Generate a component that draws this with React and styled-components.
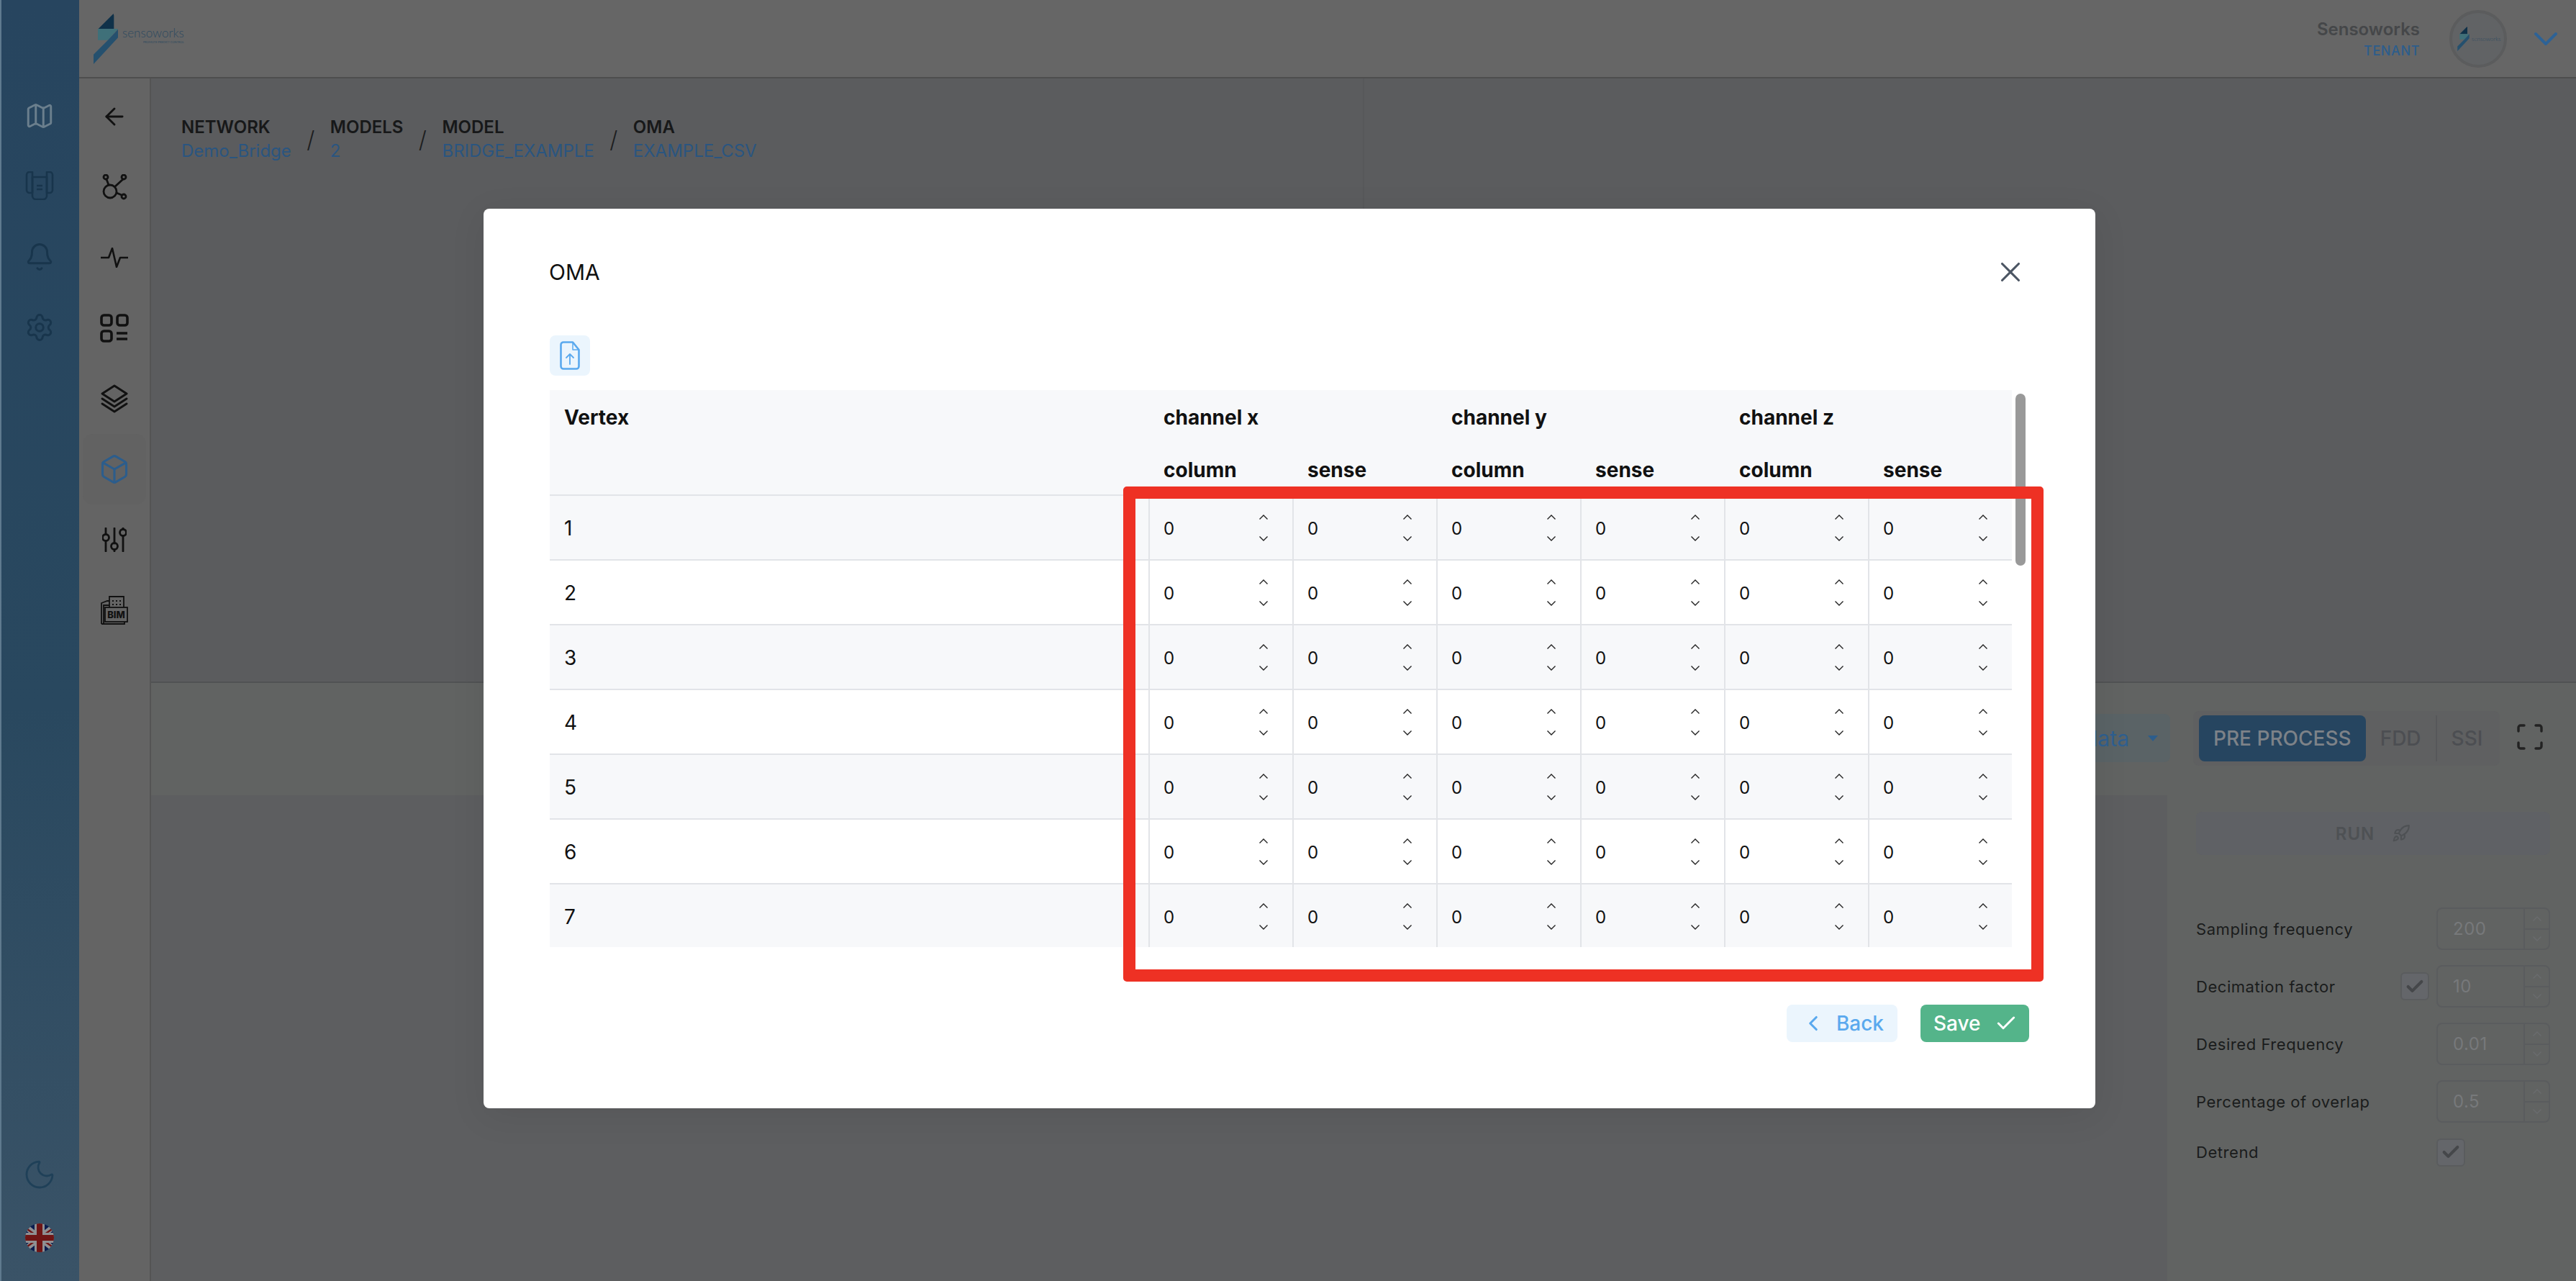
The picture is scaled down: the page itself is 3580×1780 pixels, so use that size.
import React from 'react'
import styled, { createGlobalStyle } from 'styled-components'
import { ArrowLeft, Bell, Box, Check, ChevronDown, ChevronLeft, Map, Moon, Rocket, Settings, X } from 'lucide-react'

const GlobalStyle = createGlobalStyle`
  html, body {
    margin: 0;
    padding: 0;
    background: #5b5c5e;
  }
  body {
    font-family: Inter, "Liberation Sans", sans-serif;
    overflow: hidden;
  }
  * {
    box-sizing: border-box;
  }
`

const Page = styled.div`
  position: relative;
  display: flex;
  width: 3580px;
  height: 1780px;
  overflow: hidden;
`

const Rail = styled.nav`
  width: 110px;
  flex: none;
  display: flex;
  flex-direction: column;
  align-items: center;
  padding-top: 138px;
  border-left: 2px solid #5f7a8e;
  background: linear-gradient(180deg, #27455f 0%, #29485f 55%, #3a5367 100%);
`

const RailItem = styled.div`
  height: 98px;
  flex: none;
  display: flex;
  align-items: flex-start;
  justify-content: center;
  padding-top: 2px;
  margin-left: -2px;
  color: ${p => p.$color || '#18354c'};
`

const RailBottom = styled.div`
  margin-top: auto;
  margin-left: -2px;
  padding-bottom: 40px;
  display: flex;
  flex-direction: column;
  align-items: center;
  gap: 44px;
  color: #1f4058;
`

const Shell = styled.div`
  flex: 1;
  min-width: 0;
  display: flex;
  flex-direction: column;
`

const Header = styled.header`
  height: 109px;
  flex: none;
  display: flex;
  align-items: center;
  padding: 0 14px 0 20px;
  background: #666;
  border-bottom: 2px solid #4e4e4e;
`

const LogoBlock = styled.div`
  display: flex;
  align-items: center;
`

const LogoWords = styled.div`
  display: flex;
  flex-direction: column;
  align-items: flex-end;
  margin-left: 6px;
  margin-bottom: 10px;
`

const LogoName = styled.span`
  font-family: Lato, sans-serif;
  font-weight: 300;
  font-size: 17px;
  line-height: 20px;
  color: #2e4a60;
`

const LogoTag = styled.span`
  font-family: Lato, sans-serif;
  font-size: 4px;
  line-height: 6px;
  color: #2e4a60;
`

const Account = styled.div`
  margin-left: auto;
  display: flex;
  align-items: center;
`

const AccountText = styled.div`
  display: flex;
  flex-direction: column;
  align-items: flex-end;
  gap: 4px;
`

const AccountName = styled.span`
  font-size: 24px;
  line-height: 30px;
  font-weight: 600;
  color: #454749;
`

const AccountRole = styled.span`
  font-size: 18px;
  line-height: 22px;
  font-weight: 500;
  letter-spacing: 0.6px;
  color: #2c5d8c;
`

const Avatar = styled.div`
  width: 80px;
  height: 80px;
  margin: 0 26px 0 41px;
  flex: none;
  border-radius: 50%;
  border: 4px solid #5b5c5d;
  background: #616365;
  display: flex;
  align-items: center;
  gap: 3px;
  padding-left: 7px;
  overflow: hidden;
`

const AvatarName = styled.span`
  font-family: Lato, sans-serif;
  font-weight: 300;
  font-size: 8px;
  color: #2e4a60;
`

const Body = styled.div`
  flex: 1;
  min-height: 0;
  display: flex;
`

const SideNav = styled.nav`
  width: 100px;
  flex: none;
  display: flex;
  flex-direction: column;
  align-items: center;
  padding-top: 4px;
  background: #646464;
  border-right: 2px solid #545454;
`

const SideItem = styled.div`
  width: 88px;
  height: 98px;
  flex: none;
  display: flex;
  align-items: center;
  justify-content: center;
  border-radius: 14px;
  color: ${p => (p.$active ? '#2c5d8c' : '#111')};
  background: ${p => (p.$active ? '#626262' : 'transparent')};
`

const Main = styled.main`
  flex: 1;
  min-width: 0;
  display: flex;
  flex-direction: column;
`

const TopPane = styled.section`
  height: 838px;
  flex: none;
  display: flex;
  background: #5b5c5e;
`

const TopLeft = styled.div`
  width: 1686px;
  flex: none;
  padding: 54px 0 0 42px;
  border-right: 2px solid #57585a;
`

const Crumbs = styled.div`
  display: flex;
  align-items: center;
`

const Crumb = styled.div`
  flex: none;
  display: flex;
  flex-direction: column;
  gap: 5px;
`

const CrumbTitle = styled.span`
  font-size: 24px;
  line-height: 28px;
  font-weight: 600;
  color: #171819;
`

const CrumbValue = styled.span`
  font-size: 24px;
  line-height: 28px;
  color: #2a5580;
`

const CrumbSlash = styled.span`
  width: 54px;
  flex: none;
  text-align: center;
  font-size: 32px;
  font-weight: 300;
  color: #1d1e1f;
`

const ToolBar = styled.section`
  height: 158px;
  flex: none;
  display: flex;
  align-items: flex-start;
  justify-content: flex-end;
  padding: 39px 46px 0 0;
  background: #616362;
  border-top: 2px solid #515254;
`

const DataSelect = styled.div`
  height: 67px;
  margin-top: 4px;
  padding: 0 17px 0 30px;
  display: flex;
  align-items: center;
  gap: 26px;
  border-radius: 8px;
  background: #5a6366;
  font-size: 30px;
  color: #2f5f8f;
`

const Caret = styled.span`
  width: 0;
  height: 0;
  border-left: 7px solid transparent;
  border-right: 7px solid transparent;
  border-top: 8px solid #2c5d8c;
`

const Tabs = styled.div`
  width: 426px;
  height: 76px;
  margin: 0 24px 0 32px;
  padding: 6px 8px;
  display: flex;
  align-items: stretch;
  border-radius: 8px;
  background: #5f6061;
`

const Tab = styled.div`
  flex: none;
  display: flex;
  align-items: center;
  justify-content: center;
  padding: 0 20px;
  white-space: nowrap;
  font-size: 28px;
  font-weight: 500;
  color: ${p => (p.$active ? '#7d8288' : '#4c4e52')};
  background: ${p => (p.$active ? '#264560' : 'transparent')};
  border-left: ${p => (p.$divided ? '2px solid #57585a' : 'none')};
  border-radius: ${p => (p.$divided ? '0' : '8px')};
`

const ExpandIcon = styled.svg`
  width: 36px;
  height: 36px;
  margin-top: 18px;
  flex: none;
`

const LowerPane = styled.section`
  flex: 1;
  min-height: 0;
  display: flex;
`

const PlotArea = styled.div`
  flex: 1;
  background: #5d5e60;
`

const ControlPanel = styled.aside`
  width: 568px;
  flex: none;
  padding: 23px 36px 0 40px;
  background: #616362;
`

const RunButton = styled.div`
  height: 60px;
  margin-bottom: 73px;
  display: flex;
  align-items: center;
  justify-content: center;
  gap: 24px;
  border-radius: 8px;
  background: #5f6165;
  font-size: 24px;
  font-weight: 600;
  letter-spacing: 1px;
  color: #4e5154;
`

const FormRow = styled.div`
  height: ${p => (p.$short ? 40 : 59)}px;
  margin-bottom: 21px;
  display: flex;
  align-items: center;
`

const FormLabel = styled.span`
  flex: 1;
  font-size: 22px;
  letter-spacing: 0.55px;
  color: #1a1c1c;
`

const FormCheck = styled.div`
  width: 40px;
  height: 39px;
  flex: none;
  display: flex;
  align-items: center;
  justify-content: center;
  margin-right: ${p => (p.$tail ? 118 : 10)}px;
  border-radius: 6px;
  border: 2px solid #5a5c5e;
  background: #64666a;
  color: #45474a;
`

const FormInput = styled.div`
  width: 158px;
  height: 59px;
  flex: none;
  display: flex;
  border-radius: 8px;
  border: 2px solid #5a5c5e;
`

const FormValue = styled.span`
  flex: 1;
  padding-left: 21px;
  align-self: center;
  font-size: 24px;
  letter-spacing: 0.5px;
  color: #77797b;
`

const FormSpin = styled.div`
  width: 35px;
  flex: none;
  display: flex;
  flex-direction: column;
  border-left: 2px solid #5a5c5e;
`

const FormSpinCell = styled.div`
  flex: 1;
  display: flex;
  align-items: center;
  justify-content: center;
  border-top: ${p => (p.$lower ? '2px solid #5a5c5e' : 'none')};
`

/* modal */

const Modal = styled.div`
  position: absolute;
  left: 672px;
  top: 290px;
  width: 2240px;
  height: 1250px;
  padding: 68px 92px 0;
  border-radius: 8px;
  background: #fff;
  box-shadow: 0 10px 50px rgba(0, 0, 0, 0.08);
`

const ModalHeader = styled.div`
  height: 40px;
  display: flex;
  align-items: center;
  justify-content: space-between;
  padding-right: 3px;
`

const ModalTitle = styled.h2`
  margin: 0 0 0 -1px;
  font-size: 30px;
  font-weight: 400;
  color: #111;
`

const CloseButton = styled.div`
  width: 46px;
  height: 40px;
  display: flex;
  align-items: center;
  justify-content: center;
  color: #4b5563;
  svg {
    flex: none;
  }
`

const UploadButton = styled.div`
  width: 56px;
  height: 56px;
  margin: 68px 0 20px;
  display: flex;
  align-items: center;
  justify-content: center;
  border-radius: 8px;
  background: #ebf5fd;
`

const TableArea = styled.div`
  position: relative;
  width: 2052px;
  height: 774px;
  overflow: hidden;
`

const ScrollThumb = styled.div`
  position: absolute;
  right: 1px;
  top: 5px;
  width: 14px;
  height: 239px;
  border-radius: 7px;
  background: #999;
`

const Table = styled.table`
  width: 2032px;
  table-layout: fixed;
  border-collapse: separate;
  border-spacing: 0;
  color: #111;
`

const HeadCell = styled.th`
  height: ${p => p.$height}px;
  padding: 0 0 0 ${p => p.$pad || 21}px;
  text-align: left;
  vertical-align: ${p => (p.$top ? 'top' : 'middle')};
  font-size: 28px;
  font-weight: 700;
  line-height: 34px;
  background: #f7f8fa;
  border-bottom: ${p => (p.$last ? '2px solid #e2e4e8' : 'none')};
`

const VertexHead = styled(HeadCell)`
  padding-top: 21px;
`

const VertexCell = styled.td`
  height: 90px;
  padding: 2px 0 0 20px;
  font-size: 28px;
  background: ${p => (p.$odd ? '#f7f8fa' : '#fff')};
  border-bottom: 2px solid #e2e4e8;
`

const ValueCell = styled.td`
  height: 90px;
  padding: 0;
  background: ${p => (p.$odd ? '#f7f8fa' : '#fff')};
  border-bottom: 2px solid #e2e4e8;
  border-left: 2px solid #e2e4e8;
`

const NumberField = styled.div`
  display: flex;
  align-items: center;
  justify-content: space-between;
  padding: 0 34px 0 19px;
  font-size: 24px;
  color: #111;
`

const FieldValue = styled.span`
  padding-top: 2px;
`

const Spinner = styled.div`
  display: flex;
  flex-direction: column;
  gap: 23px;
`

const Chevron = styled.svg`
  display: block;
  width: 12px;
  height: 7px;
`

const ModalFooter = styled.div`
  margin-top: 80px;
  display: flex;
  justify-content: flex-end;
  gap: 32px;
`

const FooterButton = styled.div`
  width: ${p => p.$width}px;
  height: 52px;
  padding: ${p => p.$padding};
  display: flex;
  align-items: center;
  justify-content: space-between;
  border-radius: 8px;
  font-size: 28px;
  font-weight: 500;
  color: ${p => (p.$primary ? '#fff' : '#5aa9ee')};
  background: ${p => (p.$primary ? '#54b48a' : '#ebf5fd')};
`

const Highlight = styled.div`
  position: absolute;
  left: 889px;
  top: 386px;
  width: 1279px;
  height: 688px;
  border: 17px solid #ee3124;
  border-radius: 5px;
  pointer-events: none;
`

const LogoMark = ({ width, height }) => (
  <svg width={width} height={height} viewBox="0 0 102 210" style={{ flex: 'none' }}>
    <polygon points="83,0 85,8 85,63 20,63" fill="#0f3149" />
    <polygon points="18,63 102,63 60,110 18,110" fill="#3f7079" />
    <polygon points="102,65 102,100 0,210 0,170 60,110" fill="#25506e" />
  </svg>
)

const DeviceIcon = () => (
  <svg width="40" height="40" viewBox="0 0 40 40" fill="none" stroke="currentColor" strokeWidth="2.6" strokeLinejoin="round">
    <path d="M10 30H6a4 4 0 0 1-4-4V5a4 4 0 0 1 4-4h4v29zM30 30h4a4 4 0 0 0 4-4V5a4 4 0 0 0-4-4h-4v29z" />
    <path d="M10 8h20v26a5 5 0 0 1-5 5h-10a5 5 0 0 1-5-5z" />
    <path d="M16 20h8M16 25h8" />
  </svg>
)

const UkFlag = () => (
  <svg width="40" height="40" viewBox="0 0 40 40">
    <defs>
      <clipPath id="flag-circle">
        <circle cx="20" cy="20" r="20" />
      </clipPath>
    </defs>
    <g clipPath="url(#flag-circle)">
      <rect width="40" height="40" fill="#0b1d50" />
      <path d="M0 4L40 36M40 4L0 36" stroke="#8f8f92" strokeWidth="8" />
      <path d="M0 6L40 34M40 6L0 34" stroke="#6f1515" strokeWidth="2.5" />
      <path d="M20 0V40M0 20H40" stroke="#8f8f92" strokeWidth="14" />
      <path d="M20 0V40M0 20H40" stroke="#6f1515" strokeWidth="8" />
    </g>
  </svg>
)

const NetworkIcon = () => (
  <svg width="36" height="36" viewBox="0 0 36 36" fill="none" stroke="currentColor" strokeWidth="2.8">
    <circle cx="12" cy="24" r="9" />
    <circle cx="6" cy="4" r="3" />
    <circle cx="31" cy="4" r="3" />
    <circle cx="31" cy="31" r="3" />
    <path d="M7 7l3 8M30 7L18 18M21 26l7 3" />
  </svg>
)

const PulseIcon = () => (
  <svg width="38" height="28" viewBox="0 0 38 28" fill="none" stroke="currentColor" strokeWidth="2.6" strokeLinejoin="round">
    <path d="M0 14h11l5-13 6 26 5-13h11" />
  </svg>
)

const WidgetsIcon = () => (
  <svg width="40" height="40" viewBox="0 0 40 40" fill="none" stroke="currentColor" strokeWidth="3.6">
    <rect x="2" y="2" width="14" height="14" rx="3.5" />
    <rect x="24" y="2" width="14" height="14" rx="3.5" />
    <rect x="2" y="24" width="14" height="14" rx="3.5" />
    <path d="M23 27h15M23 35h15" />
  </svg>
)

const LayersIcon = () => (
  <svg width="38" height="40" viewBox="0 0 38 40" fill="none" stroke="currentColor" strokeWidth="3" strokeLinejoin="round" strokeLinecap="round">
    <path d="M19 2l17 11-17 11L2 13z" />
    <path d="M2 20l17 11 17-11M2 27l17 11 17-11" />
  </svg>
)

const SlidersIcon = () => (
  <svg width="34" height="34" viewBox="0 0 34 34" fill="none" stroke="currentColor" strokeWidth="2.8" strokeLinecap="round">
    <path d="M5 1v8M5 19v14M17 1v21M17 31v2M29 1v1M29 12v21" />
    <circle cx="5" cy="14" r="4.5" />
    <circle cx="17" cy="26" r="4.5" />
    <circle cx="29" cy="7" r="4.5" />
  </svg>
)

const BimIcon = () => (
  <svg width="38" height="40" viewBox="0 0 38 40" fill="none" stroke="currentColor" strokeWidth="1.8">
    <path d="M12 16V1h20v15M1 39V10l8-3h3M1 39h32v-3" />
    <path d="M4 39V13h8" />
    <rect x="6" y="16" width="31" height="20" />
    <path d="M16 7h2M21 7h2M26 7h2M16 12h2M21 12h2M26 12h2" strokeWidth="2" />
    <text x="21.5" y="31" textAnchor="middle" fontSize="13" fontWeight="800" fontFamily="Inter, sans-serif" fill="currentColor" stroke="none">BIM</text>
  </svg>
)

const UploadFileIcon = () => (
  <svg width="28" height="40" viewBox="0 0 28 40" fill="none" stroke="#5aa9ee" strokeLinejoin="round">
    <path d="M18 1.5H5a3.5 3.5 0 0 0-3.5 3.5v30A3.5 3.5 0 0 0 5 38.500h18a3.500 3.500 0 0 0 3.500-3.500V12z" strokeWidth="2.600" />
    <path d="M18 1.500V12h8.500" strokeWidth="1.500" />
    <path d="M14 32V18M9 23l5-5 5 5" strokeWidth="1.800" strokeLinecap="round" />
  </svg>
)

const ChevronUpMark = ({ color = '#222' }) => (
  <Chevron viewBox="0 0 12 7" fill="none" stroke={color} strokeWidth="1.4">
    <path d="M0.5 6.500L6 1l5.500 5.500" />
  </Chevron>
)

const ChevronDownMark = ({ color = '#222' }) => (
  <Chevron viewBox="0 0 12 7" fill="none" stroke={color} strokeWidth="1.4">
    <path d="M0.5 0.500L6 6l5.500-5.500" />
  </Chevron>
)

const crumbs = [
  { title: 'NETWORK', value: 'Demo_Bridge' },
  { title: 'MODELS', value: '2' },
  { title: 'MODEL', value: 'BRIDGE_EXAMPLE' },
  { title: 'OMA', value: 'EXAMPLE_CSV' },
]

const formRows = [
  { label: 'Sampling frequency', value: '200' },
  { label: 'Decimation factor', value: '10', check: true },
  { label: 'Desired Frequency', value: '0.01' },
  { label: 'Percentage of overlap', value: '0.5' },
]

const channels = ['channel x', 'channel y', 'channel z']
const rows = [1, 2, 3, 4, 5, 6, 7]
const inputs = [0, 1, 2, 3, 4, 5]

const NumberCell = ({ odd }) => (
  <ValueCell $odd={odd}>
    <NumberField>
      <FieldValue>0</FieldValue>
      <Spinner>
        <ChevronUpMark />
        <ChevronDownMark />
      </Spinner>
    </NumberField>
  </ValueCell>
)

export default function App() {
  return (
    <Page>
      <GlobalStyle />
      <Rail>
        <RailItem $color="#6b7f8d">
          <Map size={42} strokeWidth={1.7} />
        </RailItem>
        <RailItem>
          <DeviceIcon />
        </RailItem>
        <RailItem>
          <Bell size={42} strokeWidth={1.7} />
        </RailItem>
        <RailItem>
          <Settings size={42} strokeWidth={1.7} />
        </RailItem>
        <RailBottom>
          <Moon size={48} strokeWidth={1.4} />
          <UkFlag />
        </RailBottom>
      </Rail>

      <Shell>
        <Header>
          <LogoBlock>
            <LogoMark width={34} height={70} />
            <LogoWords>
              <LogoName>sensoworks</LogoName>
              <LogoTag>PROMOTE PREDICT CONTROL</LogoTag>
            </LogoWords>
          </LogoBlock>
          <Account>
            <AccountText>
              <AccountName>Sensoworks</AccountName>
              <AccountRole>TENANT</AccountRole>
            </AccountText>
            <Avatar>
              <LogoMark width={17} height={34} />
              <AvatarName>sensoworks</AvatarName>
            </Avatar>
            <ChevronDown size={56} color="#2d6296" strokeWidth={1.7} />
          </Account>
        </Header>

        <Body>
          <SideNav>
            <SideItem>
              <ArrowLeft size={38} strokeWidth={1.8} />
            </SideItem>
            <SideItem>
              <NetworkIcon />
            </SideItem>
            <SideItem>
              <PulseIcon />
            </SideItem>
            <SideItem>
              <WidgetsIcon />
            </SideItem>
            <SideItem>
              <LayersIcon />
            </SideItem>
            <SideItem $active>
              <Box size={44} strokeWidth={1.7} />
            </SideItem>
            <SideItem>
              <SlidersIcon />
            </SideItem>
            <SideItem>
              <BimIcon />
            </SideItem>
          </SideNav>

          <Main>
            <TopPane>
              <TopLeft>
                <Crumbs>
                  {crumbs.map((crumb, i) => (
                    <React.Fragment key={crumb.title}>
                      {i > 0 && <CrumbSlash>/</CrumbSlash>}
                      <Crumb>
                        <CrumbTitle>{crumb.title}</CrumbTitle>
                        <CrumbValue>{crumb.value}</CrumbValue>
                      </Crumb>
                    </React.Fragment>
                  ))}
                </Crumbs>
              </TopLeft>
            </TopPane>

            <ToolBar>
              <DataSelect>
                Select data
                <Caret />
              </DataSelect>
              <Tabs>
                <Tab $active>PRE PROCESS</Tab>
                <Tab>FDD</Tab>
                <Tab $divided>SSI</Tab>
              </Tabs>
              <ExpandIcon viewBox="0 0 36 36" fill="none" stroke="#222" strokeWidth="3.400" strokeLinecap="round">
                <path d="M2 10V5a3 3 0 0 1 3-3h5M26 2h5a3 3 0 0 1 3 3v5M34 26v5a3 3 0 0 1-3 3h-5M10 34H5a3 3 0 0 1-3-3v-5" />
              </ExpandIcon>
            </ToolBar>

            <LowerPane>
              <PlotArea />
              <ControlPanel>
                <RunButton>
                  RUN
                  <Rocket size={26} strokeWidth={2} />
                </RunButton>
                {formRows.map(row => (
                  <FormRow key={row.label}>
                    <FormLabel>{row.label}</FormLabel>
                    {row.check && (
                      <FormCheck>
                        <Check size={28} strokeWidth={3.500} />
                      </FormCheck>
                    )}
                    <FormInput>
                      <FormValue>{row.value}</FormValue>
                      <FormSpin>
                        <FormSpinCell>
                          <ChevronUpMark color="#6a6c6e" />
                        </FormSpinCell>
                        <FormSpinCell $lower>
                          <ChevronDownMark color="#6a6c6e" />
                        </FormSpinCell>
                      </FormSpin>
                    </FormInput>
                  </FormRow>
                ))}
                <FormRow $short>
                  <FormLabel>Detrend</FormLabel>
                  <FormCheck $tail>
                    <Check size={28} strokeWidth={3.500} />
                  </FormCheck>
                </FormRow>
              </ControlPanel>
            </LowerPane>
          </Main>
        </Body>
      </Shell>

      <Modal>
        <ModalHeader>
          <ModalTitle>OMA</ModalTitle>
          <CloseButton>
            <X size={46} strokeWidth={1.600} />
          </CloseButton>
        </ModalHeader>
        <UploadButton>
          <UploadFileIcon />
        </UploadButton>
        <TableArea>
          <Table>
            <colgroup>
              <col style={{ width: 832 }} />
              {inputs.map(i => (
                <col key={i} style={{ width: 200 }} />
              ))}
            </colgroup>
            <thead>
              <tr>
                <VertexHead rowSpan={2} $pad={20} $height={147} $top $last>
                  Vertex
                </VertexHead>
                {channels.map(channel => (
                  <HeadCell key={channel} colSpan={2} $height={76}>
                    {channel}
                  </HeadCell>
                ))}
              </tr>
              <tr>
                {inputs.map(i => (
                  <HeadCell key={i} $height={71} $last>
                    {i % 2 === 0 ? 'column' : 'sense'}
                  </HeadCell>
                ))}
              </tr>
            </thead>
            <tbody>
              {rows.map(row => (
                <tr key={row}>
                  <VertexCell $odd={row % 2 === 1}>{row}</VertexCell>
                  {inputs.map(i => (
                    <NumberCell key={i} odd={row % 2 === 1} />
                  ))}
                </tr>
              ))}
            </tbody>
          </Table>
          <ScrollThumb />
        </TableArea>
        <ModalFooter>
          <FooterButton $width={154} $padding="0 19px 0 20px">
            <ChevronLeft size={34} strokeWidth={2.200} />
            Back
          </FooterButton>
          <FooterButton $primary $width={151} $padding="0 16px 0 18px">
            Save
            <Check size={32} strokeWidth={2.200} />
          </FooterButton>
        </ModalFooter>
        <Highlight />
      </Modal>
    </Page>
  )
}
